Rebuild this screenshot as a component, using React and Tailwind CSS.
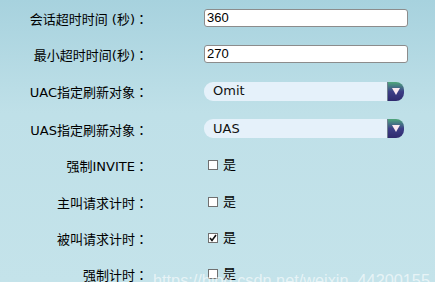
const FONT = { fontFamily: '"DejaVu Sans", "Noto Sans CJK SC", sans-serif' };

function TextInput({ value }) {
  return (
    <div className="flex h-[18px] w-[204px] items-center rounded-[3px] border border-[#8c8c8c] bg-white pl-[2px] text-[13px] text-black" style={{ fontFamily: '"Liberation Sans", sans-serif' }}>
      {value}
    </div>
  );
}

function SelectBox({ value }) {
  return (
    <div className="flex h-[19px] w-[200px]">
      <div className="flex flex-1 items-center rounded-l-[9px] bg-[#e5f1fa] pl-[9px] text-[13px] text-[#111]">
        {value}
      </div>
      <div className="flex w-[17px] items-center justify-center rounded-r-[8px] border-l border-[#6f7f8f] bg-gradient-to-b from-[#4fa77a] via-[#3d3f86] to-[#2f2a6e]">
        <svg width="8" height="7" viewBox="0 0 8 7">
          <path d="M0 0 H8 L4 7 Z" fill="#fbe9f0" />
        </svg>
      </div>
    </div>
  );
}

function Check({ checked }) {
  return (
    <div className="ml-[4px] flex items-center gap-[5px] text-[13px] text-black">
      <span className="flex h-[10px] w-[10px] items-center justify-center border border-[#707070] bg-white">
        {checked && (
          <svg width="8" height="8" viewBox="0 0 8 8">
            <path d="M1 4 L3 6.5 L7 1" stroke="#111" strokeWidth="1.6" fill="none" />
          </svg>
        )}
      </span>
      <span>是</span>
    </div>
  );
}

const ROWS = [
  { label: "会话超时时间 (秒)", h: "h-[35px]", ctrl: <TextInput value="360" /> },
  { label: "最小超时时间(秒)", h: "h-[37px]", ctrl: <TextInput value="270" /> },
  { label: "UAC指定刷新对象", h: "h-[38px]", ctrl: <SelectBox value="Omit" /> },
  { label: "UAS指定刷新对象", h: "h-[37px]", ctrl: <SelectBox value="UAS" /> },
  { label: "强制INVITE", h: "h-[36px]", ctrl: <Check /> },
  { label: "主叫请求计时", h: "h-[37px]", ctrl: <Check /> },
  { label: "被叫请求计时", h: "h-[36px]", ctrl: <Check checked /> },
  { label: "强制计时", h: "h-[36px]", ctrl: <Check /> },
];

export default function App() {
  return (
    <div className="relative h-[282px] w-[435px] overflow-hidden bg-gradient-to-b from-[#a7d2de] via-[#bfe0e8] via-40% to-[#c4e3ea]" style={FONT}>
      {ROWS.map((row) => (
        <div key={row.label} className={`flex items-center ${row.h}`}>
          <div className="w-[148px] pt-[3px] text-right text-[13px] text-black">
            {row.label}
            <span style={{ fontFamily: '"Noto Sans CJK JP", sans-serif' }}>：</span>
          </div>
          <div className="ml-[56px]">{row.ctrl}</div>
        </div>
      ))}
      <div className="absolute left-[153px] top-[272px] whitespace-nowrap text-[16.3px] leading-none text-white/60" style={{ fontFamily: '"Liberation Sans", sans-serif' }}>
        https://blog.csdn.net/weixin_44200155
      </div>
    </div>
  );
}
